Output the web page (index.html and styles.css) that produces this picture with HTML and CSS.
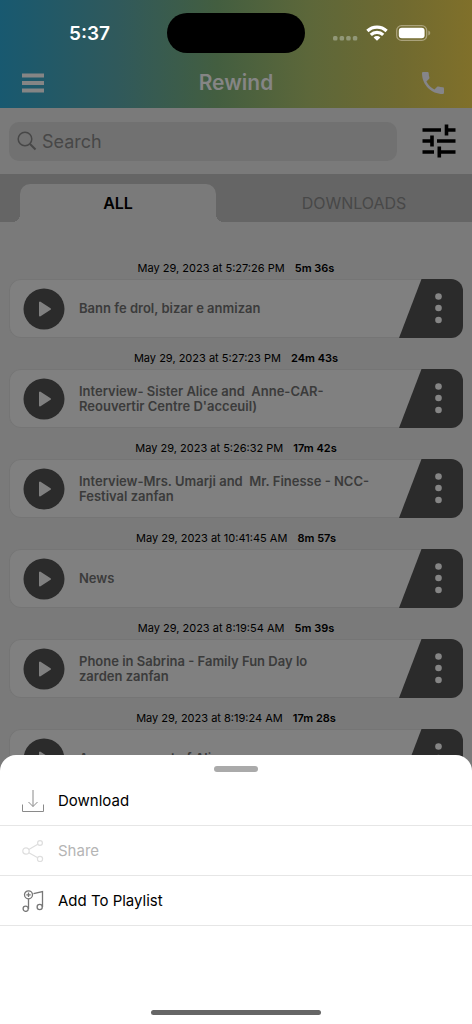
FILE: index.html
```html
<!DOCTYPE html>
<html lang="en">
<head>
<meta charset="utf-8">
<meta name="viewport" content="width=device-width, initial-scale=1">
<title>Rewind</title>
<link rel="stylesheet" href="styles.css">
</head>
<body>
<svg class="defs" aria-hidden="true">
  <symbol id="play" viewBox="0 0 42 42"><circle cx="21" cy="21" r="20.5" fill="#2b2b2b"/><path d="M17 14.6v12.8L27 21z" fill="#808080" stroke="#808080" stroke-width="2" stroke-linejoin="round"/></symbol>
  <symbol id="more" viewBox="0 0 64 59"><path d="M22.500 0H52a12 12 0 0 1 12 12V47a12 12 0 0 1-12 12H0z" fill="#2b2b2b"/><g fill="#858585"><circle cx="39.500" cy="17.500" r="3.300"/><circle cx="39.500" cy="29" r="3.300"/><circle cx="39.500" cy="41" r="3.300"/></g></symbol>
</svg>
<div class="screen">
  <header class="header">
    <div class="status">
      <div class="time">5:37</div>
      <div class="island"></div>
      <div class="indicators">
        <svg width="25" height="5" viewBox="0 0 25 5" fill="#929878"><rect width="4.500" height="4.500" rx="1.500"/><rect x="6.600" width="4.500" height="4.500" rx="1.500"/><rect x="13.200" width="4.500" height="4.500" rx="1.500"/><rect x="19.800" width="4.500" height="4.500" rx="1.500"/></svg>
        <svg width="22" height="16" viewBox="0 0 22 16" fill="none" stroke="#fff" stroke-width="3.200"><path d="M1.400 6a13.800 13.800 0 0 1 19.200 0M4.800 9.900a9 9 0 0 1 12.400 0"/><path d="M11 15.800L7.600 12.400a4.800 4.800 0 0 1 6.800 0z" fill="#fff" stroke="none"/></svg>
        <svg width="35" height="16" viewBox="0 0 35 16"><rect x=".7" y=".7" width="30" height="14.600" rx="4.800" fill="none" stroke="#aaa27b" stroke-width="1.300"/><rect x="2.800" y="2.800" width="25.800" height="10.400" rx="3" fill="#fff"/><path d="M32.300 5.500q2 .8 2 2.500t-2 2.500z" fill="#aaa27b"/></svg>
      </div>
    </div>
    <div class="nav">
      <button class="icon-button" aria-label="Menu"><svg width="22" height="20" viewBox="0 0 22 20" fill="#858585"><path d="M0 .5h22v4H0zM0 8h22v4H0zM0 15.500h22v4H0z"/></svg></button>
      <h1 class="title">Rewind</h1>
      <button class="icon-button" aria-label="Call"><svg width="22" height="22" viewBox="3 3 18 18" fill="#858589"><path d="M20 15.500c-1.250 0-2.450-.2-3.570-.57-.35-.11-.74-.03-1.020.24l-2.200 2.200c-2.830-1.440-5.150-3.750-6.590-6.590l2.200-2.210c.28-.26.360-.65.250-1C8.700 6.450 8.500 5.250 8.500 4c0-.55-.45-1-1-1H4c-.55 0-1 .45-1 1 0 9.390 7.610 17 17 17 .55 0 1-.45 1-1v-3.500c0-.55-.45-1-1-1z"/></svg></button>
    </div>
  </header>
  <div class="toolbar">
    <label class="search">
      <svg width="20" height="20" viewBox="0 0 20 20" fill="none" stroke="#474747"><circle cx="8" cy="8" r="6.800" stroke-width="1.500"/><path d="M13 13l5.500 5.500" stroke-width="2"/></svg>
      <input class="search-input" type="search" placeholder="Search" aria-label="Search">
    </label>
    <button class="icon-button" aria-label="Filters"><svg width="34" height="34" viewBox="0 0 34 34" fill="none" stroke="#000" stroke-width="3.600"><path d="M.5 6H19M25 6h8.500M.5 17H9M15 17h18.500M.5 28H12M17 28h16.500M24.500.5v11M10 11.500v11M17.300 22.500v11"/></svg></button>
  </div>
  <nav class="tabs">
    <button class="tab active">ALL</button>
    <button class="tab">DOWNLOADS</button>
  </nav>
  <main class="list">
    <article><p class="meta">May 29, 2023 at 5:27:26 PM <b>5m 36s</b></p>
      <div class="card"><button class="play" aria-label="Play"><svg><use href="#play"/></svg></button><h2 class="name">Bann fe drol, bizar e anmizan</h2><button class="more" aria-label="More"><svg><use href="#more"/></svg></button></div></article>
    <article><p class="meta">May 29, 2023 at 5:27:23 PM <b>24m 43s</b></p>
      <div class="card"><button class="play" aria-label="Play"><svg><use href="#play"/></svg></button><h2 class="name">Interview- Sister Alice and&nbsp; Anne-CAR-<br>Reouvertir Centre D'acceuil)</h2><button class="more" aria-label="More"><svg><use href="#more"/></svg></button></div></article>
    <article><p class="meta">May 29, 2023 at 5:26:32 PM <b>17m 42s</b></p>
      <div class="card"><button class="play" aria-label="Play"><svg><use href="#play"/></svg></button><h2 class="name">Interview-Mrs. Umarji and&nbsp; Mr. Finesse - NCC-<br>Festival zanfan</h2><button class="more" aria-label="More"><svg><use href="#more"/></svg></button></div></article>
    <article><p class="meta">May 29, 2023 at 10:41:45 AM <b>8m 57s</b></p>
      <div class="card"><button class="play" aria-label="Play"><svg><use href="#play"/></svg></button><h2 class="name">News</h2><button class="more" aria-label="More"><svg><use href="#more"/></svg></button></div></article>
    <article><p class="meta">May 29, 2023 at 8:19:54 AM <b>5m 39s</b></p>
      <div class="card"><button class="play" aria-label="Play"><svg><use href="#play"/></svg></button><h2 class="name">Phone in Sabrina - Family Fun Day lo<br>zarden zanfan</h2><button class="more" aria-label="More"><svg><use href="#more"/></svg></button></div></article>
    <article><p class="meta">May 29, 2023 at 8:19:24 AM <b>17m 28s</b></p>
      <div class="card"><button class="play" aria-label="Play"><svg><use href="#play"/></svg></button><h2 class="name">Announcement of Ali</h2><button class="more" aria-label="More"><svg><use href="#more"/></svg></button></div></article>
  </main>
</div>
<section class="sheet" aria-label="Actions">
  <div class="grabber"></div>
  <button class="action"><svg width="22" height="22" viewBox="0 0 22 22" fill="none" stroke="#8a8a8a"><path d="M11 0v16.500M6.500 12l4.500 4.500 4.500-4.500M.5 14.500v7h21v-7"/></svg>Download</button>
  <button class="action" disabled><svg width="22" height="22" viewBox="0 0 22 22" fill="none" stroke="#dedede" stroke-width="1.200"><circle cx="4" cy="11" r="3.200"/><circle cx="18" cy="3" r="2.400"/><circle cx="18" cy="19" r="2.600"/><path d="M6.800 9.500l9-5.200M6.800 12.700l9 5"/></svg>Share</button>
  <button class="action"><svg width="22" height="22" viewBox="0 0 22 22" fill="none" stroke="#777" stroke-width="1.300"><circle cx="6.500" cy="4.800" r="4"/><path d="M6.500 2.600V7M4.300 4.800h4.400M6.500 8.800V19M11.500 3.700L20.500 1.500V17"/><circle cx="3.700" cy="18.800" r="2.600"/><circle cx="17.700" cy="17" r="2.600"/></svg>Add To Playlist</button>
  <div class="home"></div>
</section>
</body>
</html>
```

FILE: styles.css
```css
* { box-sizing: border-box; }
body { margin: 0; background: #7a7a7a; font-family: Inter, "Liberation Sans", sans-serif; color: #000; }
button { font: inherit; color: inherit; background: none; border: 0; padding: 0; display: flex; align-items: center; justify-content: center; }
svg { display: block; flex: none; }
.defs { position: absolute; width: 0; height: 0; }
.screen { height: 100vh; overflow: hidden; }

.header { background: linear-gradient(90deg, #185970 0%, #30595b 25%, #435e40 46%, #5c673a 65%, #706a30 85%, #80702a 100%); padding-bottom: 3px; }
.status { height: 61px; padding-top: 5px; display: grid; grid-template-columns: 1fr 138px 1fr; align-items: center; }
.time { color: #fff; font-size: 19px; font-weight: 600; text-align: center; padding-left: 12px; }
.island { height: 40px; border-radius: 20px; background: #000; }
.indicators { display: flex; align-items: center; gap: 8px; justify-content: flex-end; padding-right: 41px; }
.indicators svg:first-child { margin-top: 10px; }
.nav { height: 44px; padding: 0 28px 0 22px; display: grid; grid-template-columns: 1fr auto 1fr; align-items: center; }
.nav .icon-button:first-child { justify-self: start; }
.nav .icon-button:last-child { justify-self: end; }
.title { margin: 0 0 0 6px; color: #858585; font-size: 21px; line-height: 28px; font-weight: 600; }

.toolbar { display: flex; align-items: center; gap: 25px; height: 66px; padding: 0 16px 0 9px; }
.search { flex: 1; display: flex; align-items: center; gap: 5px; height: 39px; padding: 0 8px; border-radius: 10px; background: #717171; }
.search-input { flex: 1; min-width: 0; border: 0; padding: 0; background: none; outline: none; font: 18px Inter, sans-serif; }
.search-input::placeholder { color: #474747; opacity: 1; }

.tabs { display: grid; grid-template-columns: 1fr 1fr; height: 48px; padding-top: 10px; background: #656565; }
.tab { font-size: 16px; color: #484848; }
.tab.active { position: relative; margin: 0 20px; color: #000; font-weight: 600; background: #7a7a7a; border-radius: 10px 10px 0 0; }
.tab.active::before, .tab.active::after { content: ""; position: absolute; bottom: 0; width: 8px; height: 8px; }
.tab.active::before { right: 100%; background: radial-gradient(circle at 0 0, transparent 8px, #7a7a7a 8px); }
.tab.active::after { left: 100%; background: radial-gradient(circle at 100% 0, transparent 8px, #7a7a7a 8px); }

.list { padding: 35px 9px 0; display: grid; gap: 9px; }
.meta { margin: 0; height: 22px; line-height: 22px; font-size: 11px; text-align: center; }
.meta b { font-weight: 600; margin-left: 7px; }
.card { display: flex; align-items: center; height: 59px; padding-left: 13px; border-radius: 12px; background: #808080; box-shadow: inset 0 0 0 1px #757575; }
.play { margin-left: 1px; }
.play svg { width: 42px; height: 42px; }
.name { flex: 1; margin: 0 0 0 14px; font-size: 13px; line-height: 15px; font-weight: 600; color: #3b3b3b; white-space: nowrap; }
.more svg { width: 64px; height: 59px; }

.sheet { position: fixed; inset: auto 0 0; background: #fff; border-radius: 16px 16px 0 0; padding: 11px 0 9px; }
.grabber { width: 44px; height: 6px; margin: 0 auto 4px; border-radius: 3px; background: #aaa; }
.action { width: 100%; height: 50px; padding: 0 22px; justify-content: flex-start; gap: 14px; font-size: 15px; border-bottom: 1px solid #e6e6e6; }
.action:disabled { color: #b5b5b5; }
.home { width: 170px; height: 5px; margin: 84px auto 0; border-radius: 3px; background: #666; }
```
